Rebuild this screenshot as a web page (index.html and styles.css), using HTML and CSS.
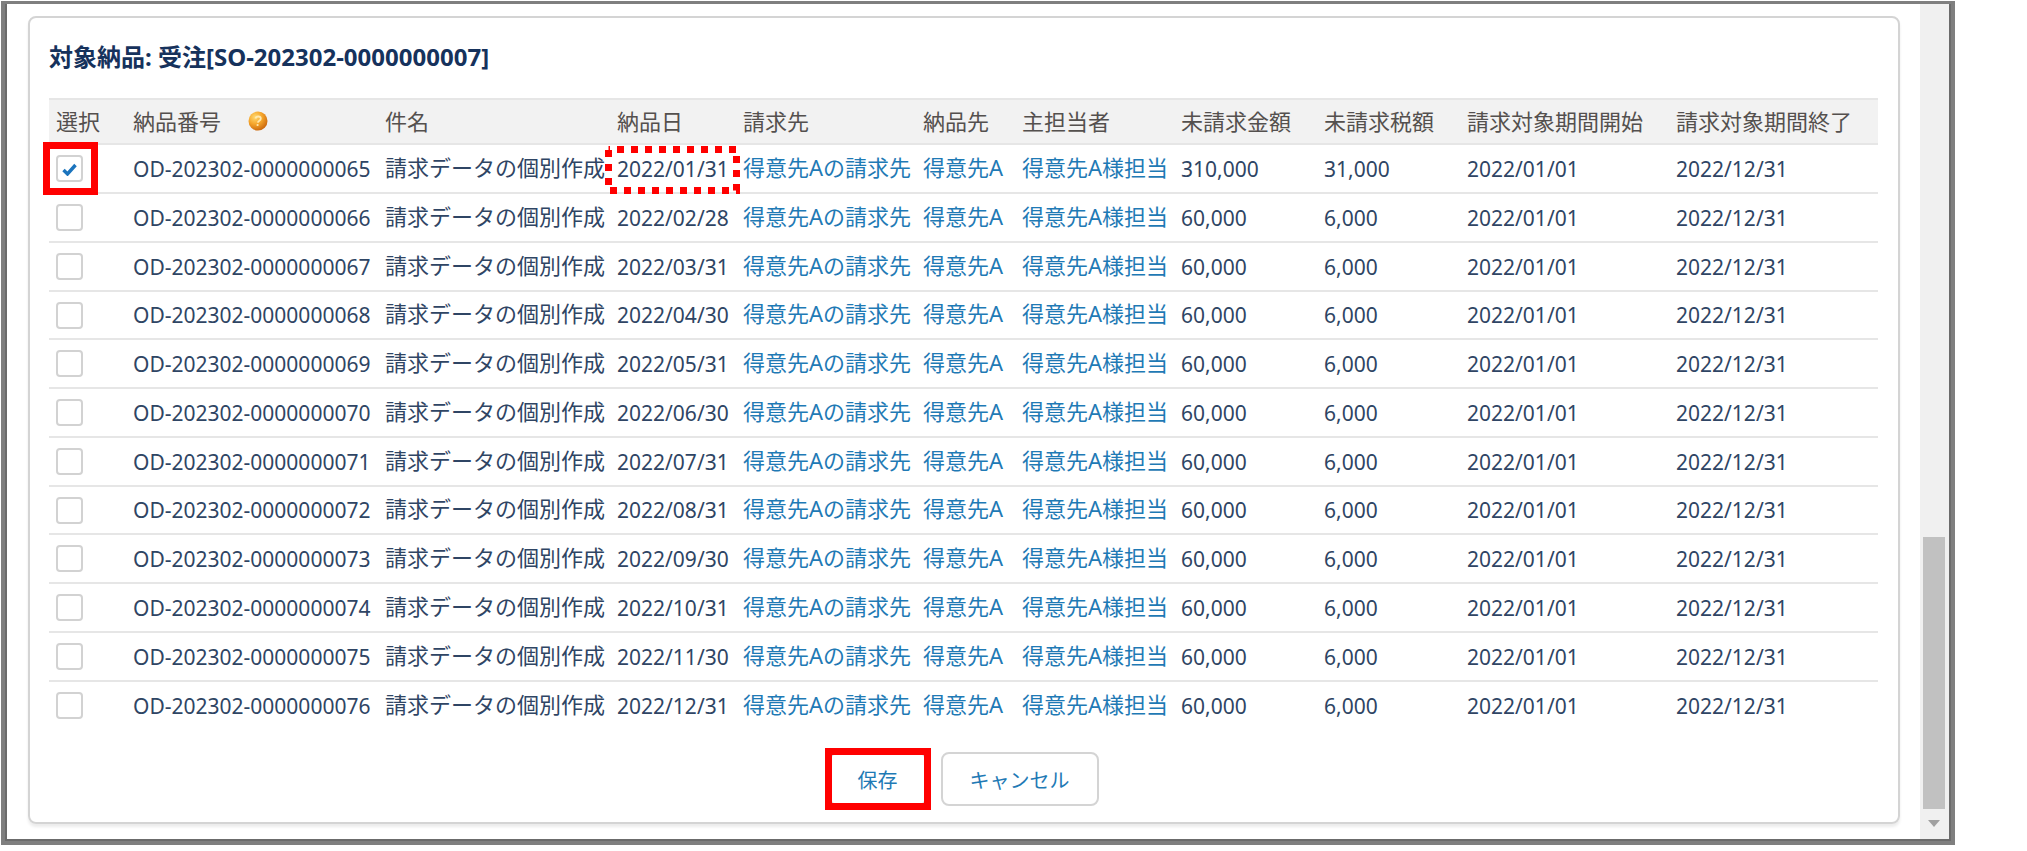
FILE: index.html
```html
<!DOCTYPE html>
<html lang="ja">
<head>
<meta charset="utf-8">
<title>対象納品</title>
<link rel="stylesheet" href="styles.css">
</head>
<body>
<div class="window">
  <main class="content">
    <form class="card">
      <h1 class="title">対象納品: 受注[SO-202302-0000000007]</h1>
      <table class="list">
        <colgroup>
          <col class="c-select"><col class="c-number"><col class="c-subject"><col class="c-date"><col class="c-bill"><col class="c-ship"><col class="c-owner"><col class="c-amount"><col class="c-amount"><col class="c-period"><col class="c-period">
        </colgroup>
        <thead>
          <tr>
            <th>選択</th>
            <th><span class="with-help">納品番号
              <svg class="help" viewBox="0 0 20 20" role="img" aria-label="ヘルプ">
                <defs><radialGradient id="orb" cx="35%" cy="30%" r="75%"><stop offset="0" stop-color="#ffd970"/><stop offset="0.5" stop-color="#f5a52b"/><stop offset="1" stop-color="#c9650c"/></radialGradient></defs>
                <circle cx="10" cy="10" r="9.5" fill="url(#orb)"/>
                <path d="M7.500 7.500Q8 5.500 10.300 5.500t2.500 2q0 1.300-1.500 2.200-1.300.8-1.500 2" fill="none" stroke="#ffe9b0" stroke-width="1.800"/>
                <circle cx="9.600" cy="14" r="1.100" fill="#ffe9b0"/>
              </svg></span></th>
            <th>件名</th><th>納品日</th><th>請求先</th><th>納品先</th><th>主担当者</th><th>未請求金額</th><th>未請求税額</th><th>請求対象期間開始</th><th>請求対象期間終了</th>
          </tr>
        </thead>
        <tbody id="rows"></tbody>
      </table>
      <div class="actions">
        <span class="marked"><button type="button" class="button">保存</button></span>
        <button type="button" class="button">キャンセル</button>
      </div>
    </form>
  </main>
  <div class="scrollbar" aria-hidden="true">
    <div class="thumb"></div>
    <svg class="arrow" viewBox="0 0 12 7"><path d="M0 0h12L6 7z" fill="#a0a0a0"/></svg>
  </div>
</div>
<script src="rows.js"></script>
</body>
</html>
```
FILE: styles.css
```css
* {
  box-sizing: border-box;
}

body {
  margin: 0;
  padding: 1px 73px 6px 1px;
  min-height: 100vh;
  display: flex;
  background: #fff;
  color: #2f4564;
  font-family: "Noto Sans", "Noto Sans CJK JP", sans-serif;
  font-size: 21px;
}

.window {
  flex: 1;
  display: flex;
  border: solid #7f7f7f;
  border-width: 3px 4px 4px 4px;
  box-shadow: inset 2px 0 #6b6b6b, inset -2px -2px #6b6b6b;
  padding: 0 2px 2px 2px;
}

.content {
  flex: 1;
  padding: 12px 20px 13px 21px;
}

.card {
  border: 2px solid #d4d4d4;
  border-radius: 8px;
  padding: 25px 20px 16px 19px;
  box-shadow: 0 3px 3px #ececec;
}

.title {
  margin: 0;
  color: #16325c;
  font-size: 24px;
  line-height: 28px;
  font-weight: 700;
}

.list {
  width: 100%;
  margin-top: 27px;
  border-collapse: collapse;
  table-layout: fixed;
}

.c-select { width: 77px; }
.c-number { width: 252px; }
.c-subject { width: 232px; }
.c-date { width: 126px; }
.c-bill { width: 180px; }
.c-ship { width: 99px; }
.c-owner { width: 159px; }
.c-amount { width: 143px; }
.c-period { width: 209px; }

.list th,
.list td {
  padding: 0 0 0 7px;
  text-align: left;
  white-space: nowrap;
  line-height: 30px;
}

.list th {
  height: 45px;
  padding-bottom: 2px;
  background: #f2f2f2;
  border-top: 2px solid #e6e6e6;
  color: #54504e;
  font-size: 22px;
  font-weight: 400;
}

.list td {
  height: 49px;
  border-top: 2px solid #e6e6e6;
}

.list tr:nth-child(4n) td {
  height: 48px;
}

.list .ja {
  padding-bottom: 4px;
  font-size: 22px;
}

.list a {
  color: #1f7ab5;
  text-decoration: none;
}

.with-help {
  display: flex;
  align-items: center;
  gap: 27px;
}

.help {
  width: 20px;
  height: 20px;
}

.marked {
  display: inline-block;
  position: relative;
}

.marked::after {
  content: "";
  position: absolute;
  inset: -4px;
  border: 7px solid #f00;
  pointer-events: none;
}

.pick {
  display: flex;
  width: 27px;
}

.pick.marked::after {
  inset: -13px -15px -13px -13px;
}

.check {
  appearance: none;
  width: 27px;
  height: 27px;
  margin: 0;
  border: 2px solid #d2d2d2;
  border-radius: 4px;
  background: #fff;
}

.tick {
  position: absolute;
  left: 6px;
  top: 8px;
  width: 15px;
  height: 13px;
}

.date-mark {
  position: relative;
}

.dashes {
  position: absolute;
  left: -12px;
  top: -9px;
  width: 135px;
  height: 48px;
}

.actions {
  display: flex;
  justify-content: center;
  gap: 14px;
  margin-top: 23px;
}

.button {
  height: 54px;
  padding: 0 27px;
  border: 2px solid #d4d4d4;
  border-radius: 8px;
  background: #fff;
  color: #1f7ab5;
  font: 20px "Noto Sans", "Noto Sans CJK JP", sans-serif;
}

.scrollbar {
  width: 29px;
  padding: 0 4px 12px 3px;
  display: flex;
  flex-direction: column;
  justify-content: flex-end;
  align-items: center;
  gap: 11px;
  background: #f0f0f0;
}

.thumb {
  width: 100%;
  height: 33%;
  background: #c1c1c1;
}

.arrow {
  width: 12px;
  height: 7px;
}
```
FILE: rows.js
```js
const dates = ["01/31", "02/28", "03/31", "04/30", "05/31", "06/30", "07/31", "08/31", "09/30", "10/31", "11/30", "12/31"];
const tick = '<svg class="tick" viewBox="0 0 15 13"><path d="M1.500 7l4 4L13.500 2" fill="none" stroke="#1b74bd" stroke-width="3.400"/></svg>';
const dashes = '<svg class="dashes" viewBox="0 0 135 48"><rect x="3.500" y="3.500" width="128" height="41" fill="none" stroke="#f00" stroke-width="7" stroke-dasharray="7 7" stroke-dashoffset="5.500"/></svg>';

document.getElementById("rows").innerHTML = dates.map((date, i) => {
  const first = i === 0;
  const number = "OD-202302-00000000" + (65 + i);
  return `<tr>
    <td><span class="pick${first ? " marked" : ""}"><input type="checkbox" class="check" aria-label="${number}"${first ? " checked" : ""}>${first ? tick : ""}</span></td>
    <td>${number}</td>
    <td class="ja">請求データの個別作成</td>
    <td><span class="date-mark">2022/${date}${first ? dashes : ""}</span></td>
    <td class="ja"><a href="#">得意先Aの請求先</a></td>
    <td class="ja"><a href="#">得意先A</a></td>
    <td class="ja"><a href="#">得意先A様担当</a></td>
    <td>${first ? "310,000" : "60,000"}</td>
    <td>${first ? "31,000" : "6,000"}</td>
    <td>2022/01/01</td>
    <td>2022/12/31</td>
  </tr>`;
}).join("");
```
